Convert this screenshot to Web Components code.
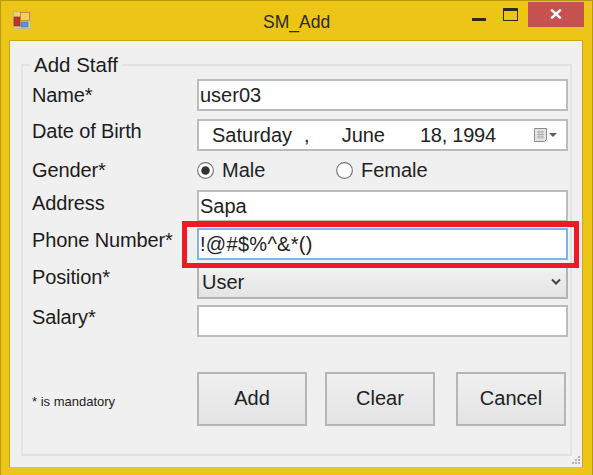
<!DOCTYPE html>
<html>
<head>
<meta charset="utf-8">
<title>SM_Add</title>
<style>
  html, body { margin: 0; padding: 0; background: #ecc516; }
  body { width: 593px; height: 475px; overflow: hidden; font: 20px "Liberation Sans", Arial, sans-serif; color: #1c1c1c; }
</style>
</head>
<body>
<sm-window caption="SM_Add">
  <group-box caption="Add Staff">
    <form-row label="Name*" top="79" height="32" label-y="0"><text-box>user03</text-box></form-row>
    <form-row label="Date of Birth" top="119" height="32" label-y="-4"><date-picker></date-picker></form-row>
    <form-row label="Gender*" top="155" height="30" label-y="0">
      <radio-opt checked>Male</radio-opt><radio-opt>Female</radio-opt>
    </form-row>
    <form-row label="Address" top="190" height="32" label-y="-3"><text-box>Sapa</text-box></form-row>
    <form-row label="Phone Number*" top="228" height="32" label-y="-4"><text-box focused style="letter-spacing:.3px">!@#$%^&amp;*()</text-box></form-row>
    <form-row label="Position*" top="265" height="34" label-y="-5"><combo-box>User</combo-box></form-row>
    <form-row label="Salary*" top="305" height="32" label-y="-4"><text-box></text-box></form-row>
    <form-actions note="* is mandatory">
      <push-button>Add</push-button>
      <push-button>Clear</push-button>
      <push-button>Cancel</push-button>
    </form-actions>
  </group-box>
  <red-mark></red-mark>
</sm-window>

<script>
class SmWindow extends HTMLElement {
  constructor() {
    super();
    this.attachShadow({mode: "open"});
  }
  connectedCallback() {
    const caption = this.getAttribute("caption");
    this.shadowRoot.innerHTML = `
    <style>
      :host { display: block; position: relative; width: 593px; height: 475px; box-sizing: border-box; background: #ecc516; border: 1px solid #b8980f; border-bottom: none; }
      header { display: flex; align-items: flex-start; height: 38px; }
      .icon { margin: 10px 0 0 12px; width: 18px; height: 18px; flex: none; }
      .title { flex: none; font-size: 17.500px; line-height: 20px; padding: 11px 0 0 0; margin-left: 232px; color: #2a2a2a; }
      .min { flex: none; width: 14px; height: 3px; background: #2b2b1a; margin: 17px 0 0 auto; }
      .max { flex: none; width: 15px; height: 13px; box-sizing: border-box; border: 1px solid #2b2b1a; border-top-width: 3px; margin: 7px 0 0 17px; }
      .close { flex: none; width: 56px; height: 25px; margin: 1px 8px 0 10px; background: #c75050; display: flex; align-items: center; justify-content: center; }
      .close svg { margin-top: -1px; }
      main { position: relative; box-sizing: border-box; margin: 1px 9px 0 8px; height: 427px; background: #f0f0f0; border: 1px solid #c9a80f; border-width: 1px 1px 0 1px; padding: 23px 10px 0 11px; }
      .grip { position: absolute; right: 1px; bottom: 1px; width: 10px; height: 10px; }
    </style>
    <header>
      <svg class="icon" viewBox="0 0 18 18">
        <rect x="0.5" y="0.5" width="17" height="17" fill="#e3d27a" stroke="#c2b98a"/>
        <rect x="1" y="6" width="6" height="9" fill="#c0322c" stroke="#8e2420" stroke-width=".6"/>
        <rect x="7.5" y="1.5" width="9" height="8" fill="#f6cf58" stroke="#a8862c" stroke-width=".8"/>
        <rect x="8" y="11" width="7" height="5" fill="#5c94dc" stroke="#3e6fb0" stroke-width=".6"/>
      </svg>
      <div class="title">${caption}</div>
      <div class="min"></div>
      <div class="max"></div>
      <div class="close">
        <svg width="12" height="10" viewBox="0 0 12 10"><path d="M1.2 .6 10.8 9.4M10.8 .6 1.2 9.4" stroke="#fff" stroke-width="2.4" fill="none"/></svg>
      </div>
    </header>
    <main>
      <slot></slot>
      <svg class="grip" viewBox="0 0 10 10" fill="#b4b4b4">
        <rect x="7" y="0" width="2" height="2"/>
        <rect x="4" y="3" width="2" height="2"/><rect x="7" y="3" width="2" height="2"/>
        <rect x="1" y="6" width="2" height="2"/><rect x="4" y="6" width="2" height="2"/><rect x="7" y="6" width="2" height="2"/>
      </svg>
    </main>`;
  }
}

class GroupBox extends HTMLElement {
  constructor() {
    super();
    this.attachShadow({mode: "open"});
  }
  connectedCallback() {
    this.shadowRoot.innerHTML = `
    <style>
      :host { display: block; position: relative; box-sizing: border-box; width: 551px; height: 392px; border: 2px solid #e3e3e3; padding: 13px 3px 0 9px; }
      .cap { position: absolute; left: 7px; top: -12px; padding: 0 4px; background: #f0f0f0; line-height: 22px; font-size: 20.500px; }
    </style>
    <div class="cap">${this.getAttribute("caption")}</div>
    <slot></slot>`;
  }
}

// rows stack by their height, "top" is only used to work out the gap from the row before
class FormRow extends HTMLElement {
  constructor() {
    super();
    this.attachShadow({mode: "open"});
  }
  connectedCallback() {
    const h = +this.getAttribute("height");
    const prev = this.previousElementSibling;
    let gap = 0;
    if (prev && prev.hasAttribute("top")) {
      gap = +this.getAttribute("top") - +prev.getAttribute("top") - +prev.getAttribute("height");
    }
    this.shadowRoot.innerHTML = `
    <style>
      :host { display: flex; height: ${h}px; margin-top: ${gap}px; }
      .lbl { flex: none; width: 165px; line-height: 24px; letter-spacing: -.12px; padding-top: ${(h - 24) / 2 + (+this.getAttribute("label-y"))}px; box-sizing: border-box; white-space: nowrap; }
      .ctl { flex: none; width: 371px; height: 100%; display: flex; align-items: center; }
    </style>
    <div class="lbl">${this.getAttribute("label")}</div>
    <div class="ctl"><slot></slot></div>`;
  }
}

class TextBox extends HTMLElement {
  constructor() {
    super();
    this.attachShadow({mode: "open"});
  }
  connectedCallback() {
    const c = this.hasAttribute("focused") ? "#7eb4ea" : "#bcbcbc";
    this.shadowRoot.innerHTML = `
    <style>
      :host { display: flex; align-items: center; box-sizing: border-box; width: 100%; height: 32px; background: #fff; border: 2px solid ${c}; padding-left: 1px; line-height: 24px; color: #222; }
    </style>
    <slot></slot>`;
  }
}

class DatePicker extends HTMLElement {
  constructor() {
    super();
    this.attachShadow({mode: "open"});
  }
  connectedCallback() {
    this.shadowRoot.innerHTML = `
    <style>
      :host { display: flex; align-items: center; box-sizing: border-box; width: 100%; height: 32px; background: #fff; border: 2px solid #bcbcbc; white-space: pre; color: #222; }
      .d { margin-left: 13px; }
      .comma { margin-left: 12px; }
      .m { margin-left: 32px; }
      .n { margin-left: 35px; letter-spacing: -.25px; }
      svg { margin-left: auto; margin-right: 6px; }
    </style>
    <span class="d">Saturday</span><span class="comma">,</span><span class="m">June</span><span class="n">18, 1994</span>
    <svg width="26" height="16" viewBox="0 0 26 16">
      <path d="M.5 1.5h12v11l-2 2H.5z" fill="#e4e4e4" stroke="#8c8c8c"/>
      <path d="M3 5h7M3 7.500h7M3 10h7M5 3.500v8.500M8 3.500v8.500" stroke="#b0b0b0" fill="none"/>
      <path d="M15 6h8l-4 4z" fill="#4f6080"/>
    </svg>`;
  }
}

class RadioOpt extends HTMLElement {
  constructor() {
    super();
    this.attachShadow({mode: "open"});
  }
  connectedCallback() {
    const dot = this.hasAttribute("checked") ? '<circle cx="8" cy="8" r="4" fill="#333"/>' : "";
    this.shadowRoot.innerHTML = `
    <style>
      :host { display: flex; align-items: center; gap: 8px; flex: none; width: 139px; line-height: 24px; color: #222; }
      svg { flex: none; }
    </style>
    <svg width="17" height="17" viewBox="0 0 16 16"><circle cx="8" cy="8" r="7.400" fill="#fff" stroke="#777" stroke-width="1.100"/>${dot}</svg>
    <span><slot></slot></span>`;
  }
}

class ComboBox extends HTMLElement {
  constructor() {
    super();
    this.attachShadow({mode: "open"});
  }
  connectedCallback() {
    this.shadowRoot.innerHTML = `
    <style>
      :host { display: flex; align-items: center; justify-content: space-between; box-sizing: border-box; width: 100%; height: 34px; background: linear-gradient(#f1f1f1, #e4e4e4); border: 2px solid #b4b4b4; padding: 0 5px 0 3px; color: #222; }
    </style>
    <span><slot></slot></span>
    <svg width="10" height="8" viewBox="0 0 10 8"><path d="M1 1.500 5 5.500 9 1.500" stroke="#444" stroke-width="2" fill="none"/></svg>`;
  }
}

class FormActions extends HTMLElement {
  constructor() {
    super();
    this.attachShadow({mode: "open"});
  }
  connectedCallback() {
    this.shadowRoot.innerHTML = `
    <style>
      :host { display: flex; align-items: center; margin-top: 35px; height: 54px; }
      .note { flex: none; width: 165px; font-size: 13px; color: #222; padding-top: 4px; white-space: nowrap; }
      .btns { display: flex; gap: 18px; }
      ::slotted(:last-child) { margin-left: 3px; }
    </style>
    <div class="note">${this.getAttribute("note")}</div>
    <div class="btns"><slot></slot></div>`;
  }
}

class PushButton extends HTMLElement {
  constructor() {
    super();
    this.attachShadow({mode: "open"});
  }
  connectedCallback() {
    this.shadowRoot.innerHTML = `
    <style>
      :host { display: flex; align-items: center; justify-content: center; box-sizing: border-box; width: 110px; height: 54px; background: linear-gradient(#f0f0f0, #e3e3e3); border: 2px solid #b6b6b6; padding-bottom: 2px; color: #222; }
    </style>
    <slot></slot>`;
  }
}

// the red annotation drawn over the phone number box
class RedMark extends HTMLElement {
  constructor() {
    super();
    this.attachShadow({mode: "open"});
  }
  connectedCallback() {
    this.shadowRoot.innerHTML = `
    <style>
      :host { position: absolute; left: 172px; top: 180px; width: 397px; height: 47px; box-sizing: border-box; border: 5px solid #ed1c24; border-top-width: 6px; pointer-events: none; }
    </style>`;
  }
}

customElements.define("sm-window", SmWindow);
customElements.define("group-box", GroupBox);
customElements.define("form-row", FormRow);
customElements.define("text-box", TextBox);
customElements.define("date-picker", DatePicker);
customElements.define("radio-opt", RadioOpt);
customElements.define("combo-box", ComboBox);
customElements.define("form-actions", FormActions);
customElements.define("push-button", PushButton);
customElements.define("red-mark", RedMark);
</script>
</body>
</html>
